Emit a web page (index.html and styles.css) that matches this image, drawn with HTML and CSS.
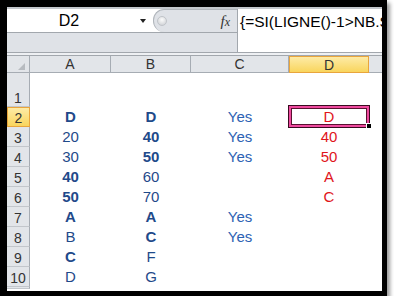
FILE: index.html
```html
<!DOCTYPE html>
<html lang="fr">
<head>
    <meta charset="UTF-8">
    <meta name="viewport" content="width=device-width, initial-scale=1.0">
    <title>Feuille - D2</title>
    <link rel="stylesheet" href="styles.css">
</head>
<body>
    <div class="frame">
        <div class="bar">
            <div class="bar-left">
                <div class="bar-top">
                    <div class="namebox">
                        <span class="name">D2</span>
                        <span class="arrow"></span>
                    </div>
                    <div class="tools">
                        <span class="knob"></span>
                        <span class="fx">f<span class="fx-x">x</span></span>
                    </div>
                </div>
                <div class="bar-low"></div>
            </div>
            <div class="formula">{=SI(LIGNE()-1&gt;NB.SI(</div>
        </div>
        <div class="sep"></div>

        <div class="sheet">
            <!-- en-têtes de colonnes -->
            <div class="hd corner"><span class="tri"></span></div>
            <div class="hd">A</div>
            <div class="hd">B</div>
            <div class="hd">C</div>
            <div class="hd active">D</div>
            <div class="hd last"></div>

            <div class="rh">1</div>
            <div class="c"></div><div class="c"></div><div class="c"></div><div class="c"></div><div class="c"></div>

            <div class="rh active">2</div>
            <div class="c blue b">D</div>
            <div class="c blue b">D</div>
            <div class="c yes">Yes</div>
            <div class="c red cur">D<span class="sel"></span><span class="handle"></span></div>
            <div class="c"></div>

            <div class="rh">3</div>
            <div class="c blue">20</div>
            <div class="c blue b">40</div>
            <div class="c yes">Yes</div>
            <div class="c red">40</div>
            <div class="c"></div>

            <div class="rh">4</div>
            <div class="c blue">30</div>
            <div class="c blue b">50</div>
            <div class="c yes">Yes</div>
            <div class="c red">50</div>
            <div class="c"></div>

            <div class="rh">5</div>
            <div class="c blue b">40</div>
            <div class="c blue">60</div>
            <div class="c"></div>
            <div class="c red">A</div>
            <div class="c"></div>

            <div class="rh">6</div>
            <div class="c blue b">50</div>
            <div class="c blue">70</div>
            <div class="c"></div>
            <div class="c red">C</div>
            <div class="c"></div>

            <div class="rh">7</div>
            <div class="c blue b">A</div>
            <div class="c blue b">A</div>
            <div class="c yes">Yes</div>
            <div class="c"></div>
            <div class="c"></div>

            <div class="rh">8</div>
            <div class="c blue">B</div>
            <div class="c blue b">C</div>
            <div class="c yes">Yes</div>
            <div class="c"></div>
            <div class="c"></div>

            <div class="rh">9</div>
            <div class="c blue b">C</div>
            <div class="c blue">F</div>
            <div class="c"></div>
            <div class="c"></div>
            <div class="c"></div>

            <div class="rh">10</div>
            <div class="c blue">D</div>
            <div class="c blue">G</div>
            <div class="c"></div>
            <div class="c"></div>
            <div class="c"></div>

            <div class="rh"></div>
            <div class="c"></div><div class="c"></div><div class="c"></div><div class="c"></div><div class="c"></div>
        </div>
    </div>
</body>
</html>
```

FILE: styles.css
```css
body {
    margin: 0;
    padding: 0;
    background-color: #fff;
    font-family: "Liberation Sans", Arial, sans-serif;
}

.frame {
    width: 375px;
    height: 284px;
    border-style: solid;
    border-color: #000;
    border-width: 7px 5px 5px 7px;
    box-shadow: 3px 3px 4px rgba(0, 0, 0, 0.4);
    overflow: hidden;
    background-color: #fff;
}

/* Barre de formule */
.bar {
    display: grid;
    grid-template-columns: 230px 1fr;
    height: 45px;
    box-sizing: border-box;
    border-top: 2px solid #c3c7cc;
    background-color: #dfe2e7;
}

.bar-left {
    display: flex;
    flex-direction: column;
}

.bar-top {
    display: flex;
    height: 24px;
    box-sizing: border-box;
    border-bottom: 1px solid #a2a7ad;
    background-color: #fff;
}

.namebox {
    width: 146px;
    display: flex;
    align-items: center;
}

.name {
    width: 124px;
    text-align: center;
    font-size: 16px;
    color: #000;
}

.arrow {
    margin-left: 9px;
    width: 0;
    height: 0;
    border-left: 3.5px solid transparent;
    border-right: 3.5px solid transparent;
    border-top: 4px solid #222;
}

.tools {
    flex: 1;
    display: flex;
    align-items: center;
    background-color: #dfe2e7;
    border: 1px solid #b0b5bb;
    border-right: none;
    border-bottom: none;
    border-radius: 11px 0 0 11px;
}

.knob {
    width: 8px;
    height: 8px;
    margin-left: 3px;
    border-radius: 50%;
    border: 1px solid #c0c4c9;
    background: radial-gradient(circle at 50% 35%, #fbfbfb, #c9ccd0);
}

.fx {
    margin-left: auto;
    margin-right: 7px;
    font-family: "Liberation Serif", serif;
    font-style: italic;
    font-size: 15px;
    color: #333;
}

.fx-x {
    font-size: 12px;
}

.bar-low {
    flex: 1;
}

.formula {
    background-color: #fff;
    border-left: 1px solid #a2a7ad;
    padding: 4px 0 0 2px;
    font-size: 15.5px;
    color: #000;
    white-space: nowrap;
    overflow: hidden;
}

.sep {
    height: 4px;
    box-sizing: border-box;
    border-top: 1px solid #a2a7ad;
    border-bottom: 1px solid #a2a7ad;
    background-color: #eef0f3;
}

/* Feuille */
.sheet {
    display: grid;
    grid-template-columns: 23px 81px 80px 98px 80px 1fr;
    grid-template-rows: 17px 34px repeat(9, 20px) 1fr;
}

.hd {
    display: flex;
    align-items: center;
    justify-content: center;
    box-sizing: border-box;
    background-color: #e2e5e9;
    border-right: 1px solid #a6acb3;
    border-bottom: 1px solid #a6acb3;
    font-size: 14px;
    color: #333;
}

.hd.last {
    border-right: none;
}

.corner {
    align-items: flex-end;
    justify-content: flex-end;
    padding: 0 4px 2px 0;
}

.tri {
    width: 0;
    height: 0;
    border-left: 7px solid transparent;
    border-bottom: 7px solid #b7bbc0;
}

.rh {
    display: flex;
    align-items: flex-end;
    justify-content: center;
    box-sizing: border-box;
    background-color: #e2e5e9;
    border-right: 1px solid #a6acb3;
    border-bottom: 1px solid #c2c6cb;
    font-size: 14px;
    line-height: 16px;
    color: #333;
}

.active {
    background: linear-gradient(#fdeba6, #f9d55d);
    border: 1px solid #e9a53c;
}

.c {
    display: flex;
    align-items: flex-end;
    justify-content: center;
    padding-bottom: 2px;
    font-size: 15px;
    line-height: 17px;
}

.b {
    font-weight: bold;
}

.blue {
    color: #1f4a8a;
}

.yes {
    color: #2d62b3;
}

.red {
    color: #e0151b;
}

.cur {
    position: relative;
}

.sel {
    position: absolute;
    left: -1px;
    top: -2px;
    right: -1px;
    bottom: -1px;
    border: 1px solid #3a0a20;
    box-shadow: inset 0 0 0 2px #ef4a9f, inset 0 0 0 3px #5a1030;
}

.handle {
    position: absolute;
    right: -2px;
    bottom: -1px;
    width: 4px;
    height: 4px;
    background-color: #000;
    border-left: 1px solid #fff;
    border-top: 1px solid #fff;
}
```
